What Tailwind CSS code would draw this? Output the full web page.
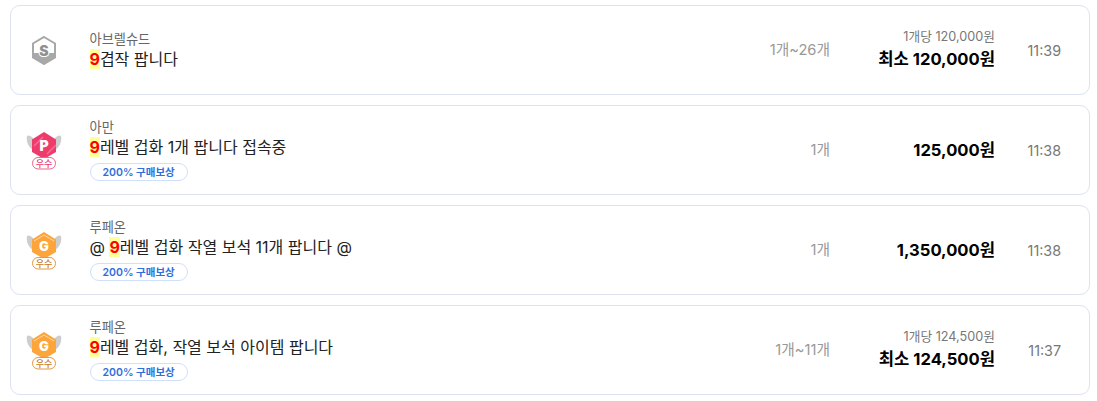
<!DOCTYPE html>
<html lang="ko">
<head>
  <meta charset="UTF-8">
  <title>매물 목록</title>
  <script src="https://cdn.jsdelivr.net/npm/@tailwindcss/browser@4"></script>
</head>
<body class="bg-white font-['Inter','Noto_Sans_CJK_KR',sans-serif] overflow-hidden">
  <ul class="flex flex-col gap-[10px] pl-[10px] pr-[7px] pt-[5px]">
    <!-- row 1 -->
    <li class="flex items-center h-[90px] border border-[#dde2f0] rounded-[10px] pl-[14px] pr-[28px]">
      <div class="w-[38px] shrink-0 flex justify-center">
        <svg width="30" height="30" viewBox="0 0 30 30">
          <path d="M15 2 L26 8.5 V22.5 L15 29 L4 22.5 V8.5 Z" fill="#fff" stroke="#a8a8a8" stroke-width="2"/>
          <path d="M4 18 H26 V22.5 L15 29 L4 22.5 Z" fill="#a8a8a8"/>
          <text x="15" y="20.5" text-anchor="middle" font-size="14" font-weight="900" fill="#909090" stroke="#fff" stroke-width="2" paint-order="stroke">S</text>
        </svg>
      </div>
      <div class="ml-[26.5px] flex-1 min-w-0">
        <p class="text-[13.2px] leading-[16px] text-[#666]">아브렐슈드</p>
        <p class="mt-[1px] text-[16px] leading-[22px] text-[#222]"><span class="bg-[#ffff99] text-[#f00] font-bold">9</span>겹작 팝니다</p>
      </div>
      <div class="w-[120px] text-right text-[14.7px] text-[#999]">1개~26개</div>
      <div class="w-[165px] text-right pt-[1px]">
        <p class="text-[12.7px] leading-[16px] text-[#777]">1개당 120,000원</p>
        <p class="mt-[1px] text-[16.6px] leading-[26px] font-bold text-black">최소 120,000원</p>
      </div>
      <div class="w-[66px] pt-[2px] text-right text-[14.3px] text-[#777]">11:39</div>
    </li>
    <!-- row 2 -->
    <li class="flex items-center h-[90px] border border-[#dde2f0] rounded-[10px] pl-[14px] pr-[28px]">
      <div class="w-[38px] shrink-0 flex justify-center">
        <svg width="38" height="40" viewBox="0 0 38 40">
          <path d="M8 8 C5 5 3 5 2 6 C1 11 3 17 8 20 Z M30 8 C33 5 35 5 36 6 C37 11 35 17 30 20 Z" fill="#cdcdcd"/>
          <path d="M19 2 L31 9.5 V22 L19 29 L7 22 V9.5 Z" fill="#ef3a6c"/>
          <path d="M9 16 L18 7 M22 24 L31 15" stroke="#f56f94" stroke-width="1.5"/>
          <text x="19" y="21" text-anchor="middle" font-size="14" font-weight="900" fill="#fff">P</text>
          <rect x="7.5" y="27.5" width="23" height="11.5" rx="5.7" fill="#fff" stroke="#f0648c"/>
          <text x="19" y="36.6" text-anchor="middle" font-size="9" font-weight="500" fill="#e83e6e">우수</text>
        </svg>
      </div>
      <div class="ml-[26.5px] flex-1 min-w-0">
        <p class="text-[13.2px] leading-[16px] text-[#666]">아만</p>
        <p class="mt-[1px] text-[16px] leading-[22px] text-[#222]"><span class="bg-[#ffff99] text-[#f00] font-bold">9</span>레벨 겁화 1개 팝니다 접속중</p>
        <span class="mt-[3px] inline-flex items-center h-[18px] px-[12px] border border-[#cfe0fb] rounded-full text-[10.5px] font-semibold text-[#2f6fdc]">200% 구매보상</span>
      </div>
      <div class="w-[120px] text-right text-[14.7px] text-[#999]">1개</div>
      <div class="w-[165px] pt-[1px] text-right text-[16.6px] font-bold text-black">125,000원</div>
      <div class="w-[66px] pt-[2px] text-right text-[14.3px] text-[#777]">11:38</div>
    </li>
    <!-- row 3 -->
    <li class="flex items-center h-[90px] border border-[#dde2f0] rounded-[10px] pl-[14px] pr-[28px]">
      <div class="w-[38px] shrink-0 flex justify-center">
        <svg width="38" height="40" viewBox="0 0 38 40">
          <path d="M8 8 C5 5 3 5 2 6 C1 11 3 17 8 20 Z M30 8 C33 5 35 5 36 6 C37 11 35 17 30 20 Z" fill="#cdcdcd"/>
          <path d="M19 2 L31 9.5 V22 L19 29 L7 22 V9.5 Z" fill="#fda53a"/>
          <path d="M9 11 L19 5 L29 11" fill="none" stroke="#ffd9a8" stroke-width="1"/>
          <text x="19" y="21" text-anchor="middle" font-size="13" font-weight="900" fill="#fff">G</text>
          <rect x="7.5" y="27.5" width="23" height="11.5" rx="5.7" fill="#fff" stroke="#e8983a"/>
          <text x="19" y="36.6" text-anchor="middle" font-size="9" font-weight="500" fill="#c87a1a">우수</text>
        </svg>
      </div>
      <div class="ml-[26.5px] flex-1 min-w-0">
        <p class="text-[13.2px] leading-[16px] text-[#666]">루페온</p>
        <p class="mt-[1px] text-[16px] leading-[22px] text-[#222]">@ <span class="bg-[#ffff99] text-[#f00] font-bold">9</span>레벨 겁화 작열 보석 11개 팝니다 @</p>
        <span class="mt-[3px] inline-flex items-center h-[18px] px-[12px] border border-[#cfe0fb] rounded-full text-[10.5px] font-semibold text-[#2f6fdc]">200% 구매보상</span>
      </div>
      <div class="w-[120px] text-right text-[14.7px] text-[#999]">1개</div>
      <div class="w-[165px] pt-[1px] text-right text-[16.6px] font-bold text-black">1,350,000원</div>
      <div class="w-[66px] pt-[2px] text-right text-[14.3px] text-[#777]">11:38</div>
    </li>
    <!-- row 4 -->
    <li class="flex items-center h-[90px] border border-[#dde2f0] rounded-[10px] pl-[14px] pr-[28px]">
      <div class="w-[38px] shrink-0 flex justify-center">
        <svg width="38" height="40" viewBox="0 0 38 40">
          <path d="M8 8 C5 5 3 5 2 6 C1 11 3 17 8 20 Z M30 8 C33 5 35 5 36 6 C37 11 35 17 30 20 Z" fill="#cdcdcd"/>
          <path d="M19 2 L31 9.5 V22 L19 29 L7 22 V9.5 Z" fill="#fda53a"/>
          <path d="M9 11 L19 5 L29 11" fill="none" stroke="#ffd9a8" stroke-width="1"/>
          <text x="19" y="21" text-anchor="middle" font-size="13" font-weight="900" fill="#fff">G</text>
          <rect x="7.5" y="27.5" width="23" height="11.5" rx="5.7" fill="#fff" stroke="#e8983a"/>
          <text x="19" y="36.6" text-anchor="middle" font-size="9" font-weight="500" fill="#c87a1a">우수</text>
        </svg>
      </div>
      <div class="ml-[26.5px] flex-1 min-w-0">
        <p class="text-[13.2px] leading-[16px] text-[#666]">루페온</p>
        <p class="mt-[1px] text-[16px] leading-[22px] text-[#222]"><span class="bg-[#ffff99] text-[#f00] font-bold">9</span>레벨 겁화, 작열 보석 아이템 팝니다</p>
        <span class="mt-[3px] inline-flex items-center h-[18px] px-[12px] border border-[#cfe0fb] rounded-full text-[10.5px] font-semibold text-[#2f6fdc]">200% 구매보상</span>
      </div>
      <div class="w-[120px] text-right text-[14.7px] text-[#999]">1개~11개</div>
      <div class="w-[165px] text-right pt-[1px]">
        <p class="text-[12.7px] leading-[16px] text-[#777]">1개당 124,500원</p>
        <p class="mt-[1px] text-[16.6px] leading-[26px] font-bold text-black">최소 124,500원</p>
      </div>
      <div class="w-[66px] pt-[2px] text-right text-[14.3px] text-[#777]">11:37</div>
    </li>
  </ul>
</body>
</html>
